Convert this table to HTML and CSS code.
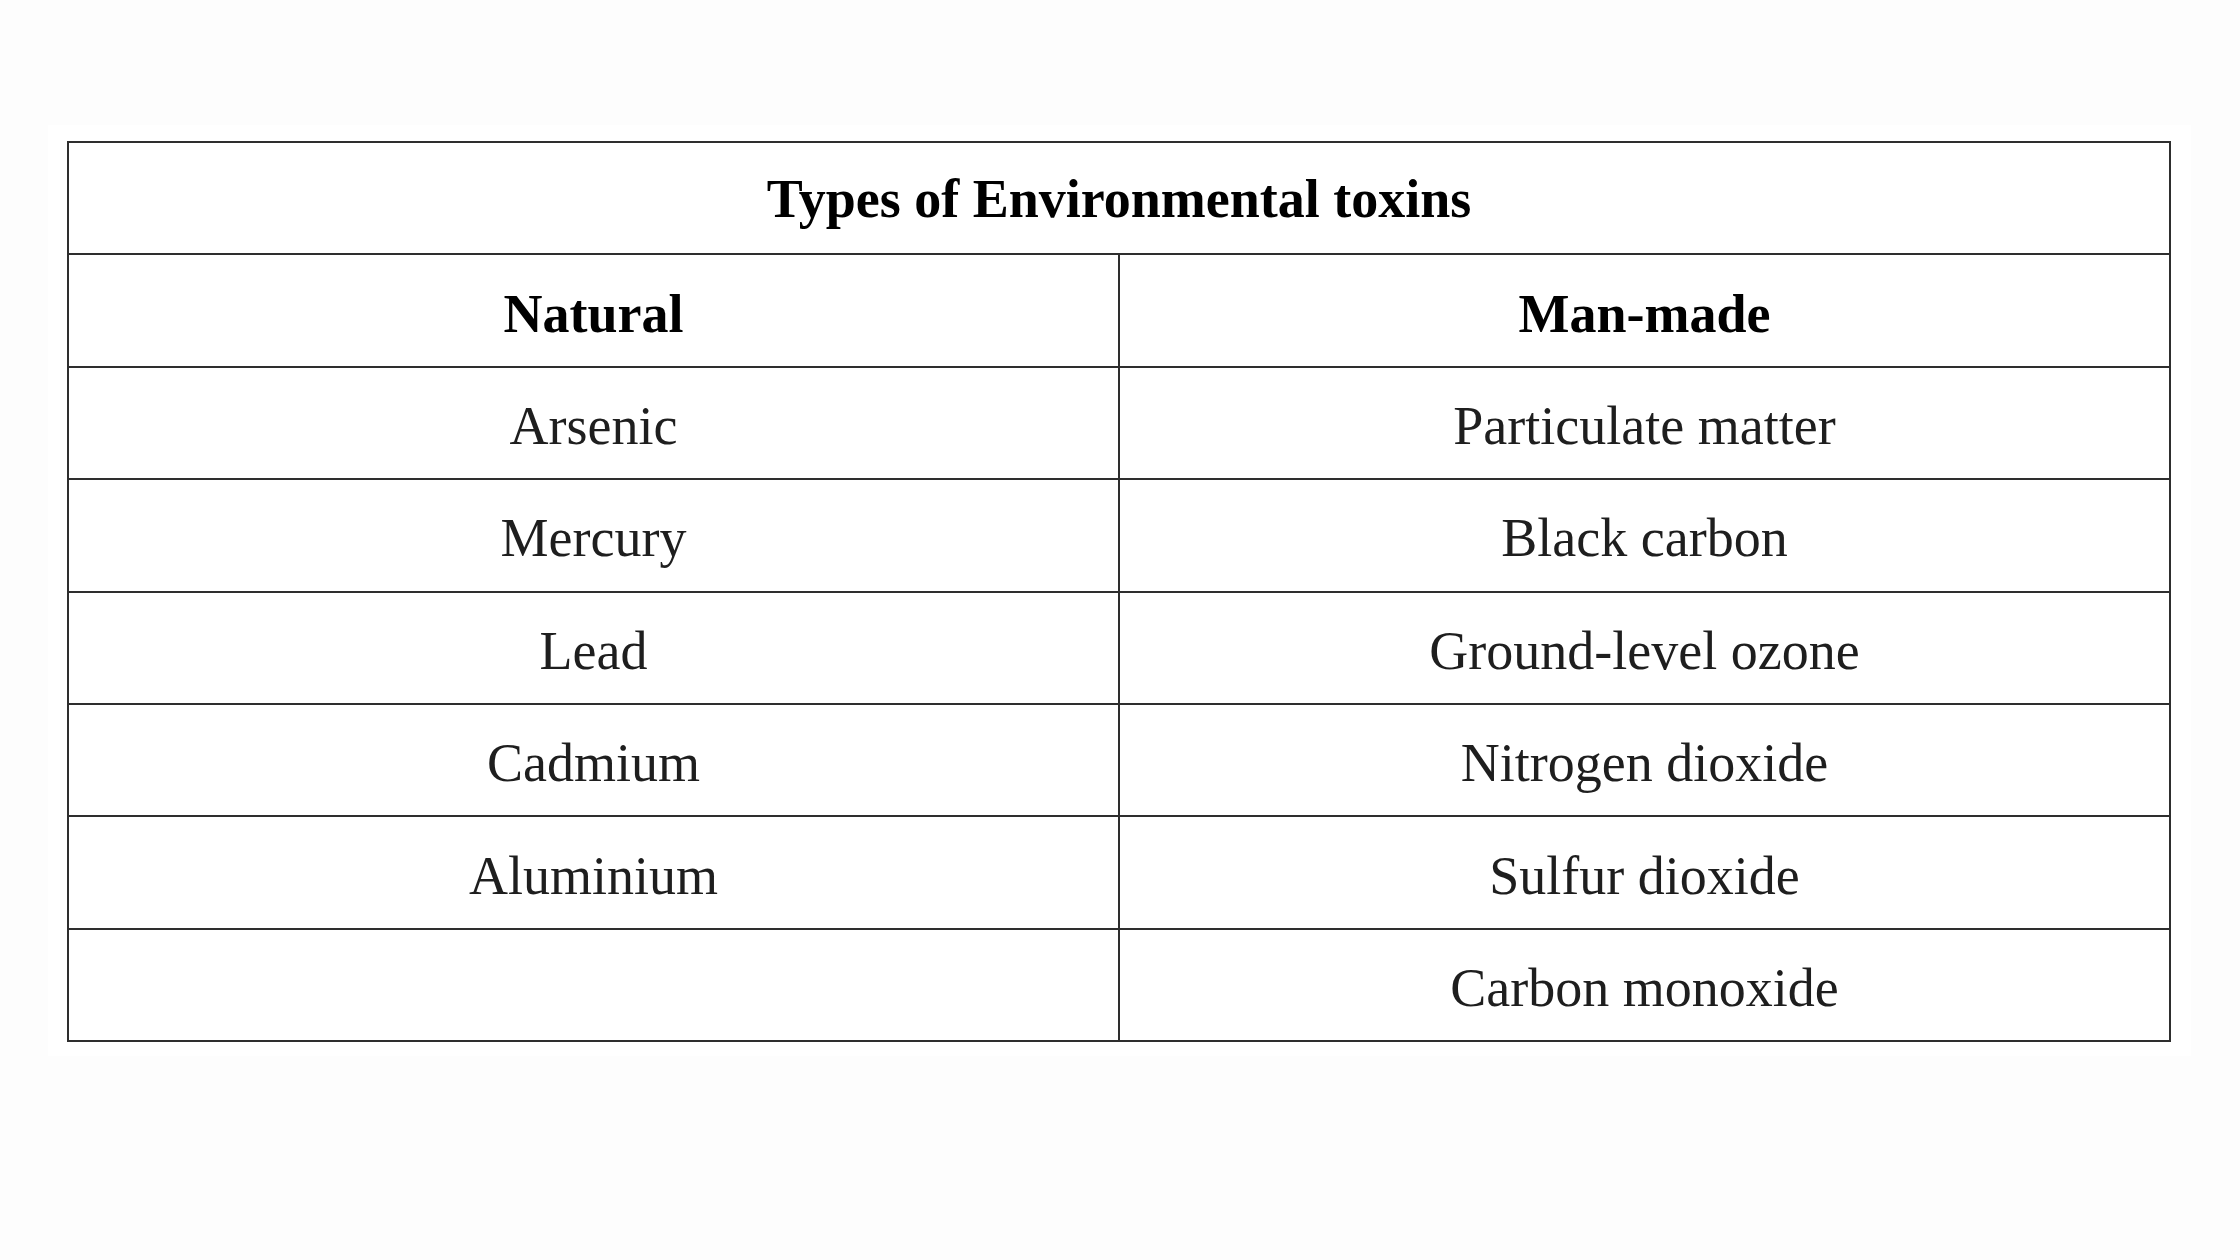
FILE: index.html
```html
<!DOCTYPE html>
<html lang="en">
<head>
<meta charset="utf-8">
<title>Types of Environmental toxins</title>
<link rel="stylesheet" href="styles.css">
</head>
<body>
<div class="panel">
  <table class="toxins">
    <thead>
      <tr><th class="title" colspan="2">Types of Environmental toxins</th></tr>
      <tr><th class="head">Natural</th><th class="head">Man-made</th></tr>
    </thead>
    <tbody>
      <tr><td>Arsenic</td><td>Particulate matter</td></tr>
      <tr><td>Mercury</td><td>Black carbon</td></tr>
      <tr><td>Lead</td><td>Ground-level ozone</td></tr>
      <tr><td>Cadmium</td><td>Nitrogen dioxide</td></tr>
      <tr><td>Aluminium</td><td>Sulfur dioxide</td></tr>
      <tr><td></td><td>Carbon monoxide</td></tr>
    </tbody>
  </table>
</div>
</body>
</html>
```

FILE: styles.css
```css
html, body {
  margin: 0;
  padding: 0;
  background: #fdfdfd;
}

body {
  font-family: "Liberation Serif", "Times New Roman", serif;
  color: #1e1e1e;
}

.panel {
  background: #ffffff;
  width: 2143px;
  margin: 125px 0 0 48px;
  padding: 16px 0 14px 19px;
  box-sizing: border-box;
}

.toxins {
  width: 2104px;
  border-collapse: collapse;
  table-layout: fixed;
}

.toxins th,
.toxins td {
  border: 2px solid #2e2e2e;
  height: 112.4px;
  padding: 6px 0 0 0;
  box-sizing: border-box;
  text-align: center;
  vertical-align: middle;
  font-size: 54px;
  line-height: 62px;
  font-weight: normal;
}

.toxins th.title {
  font-size: 54px;
  font-weight: bold;
  color: #000;
  padding-top: 2px;
}

.toxins th.head {
  font-weight: bold;
  color: #000;
  width: 50%;
}
```
